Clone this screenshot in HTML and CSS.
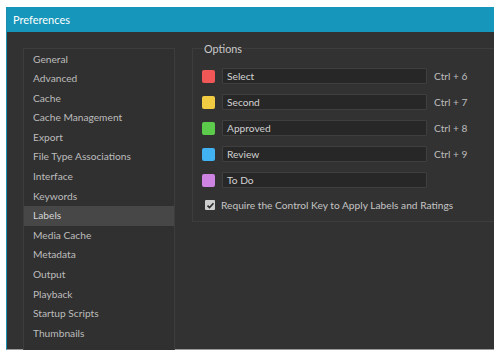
FILE: index.html
```html
<!DOCTYPE html>
<html lang="en">
<head>
  <meta charset="UTF-8">
  <title>Preferences</title>
  <link rel="stylesheet" href="styles.css">
</head>
<body>
  <div class="window">
    <div class="titlebar">Preferences</div>

    <div class="content">
      <ul class="sidebar">
        <li>General</li>
        <li>Advanced</li>
        <li>Cache</li>
        <li>Cache Management</li>
        <li>Export</li>
        <li>File Type Associations</li>
        <li>Interface</li>
        <li>Keywords</li>
        <li class="active">Labels</li>
        <li>Media Cache</li>
        <li>Metadata</li>
        <li>Output</li>
        <li>Playback</li>
        <li>Startup Scripts</li>
        <li>Thumbnails</li>
      </ul>

      <fieldset class="options">
        <legend>Options</legend>

        <div class="label-row">
          <span class="swatch red"></span>
          <div class="label-input">Select</div>
          <span class="shortcut">Ctrl + 6</span>
        </div>
        <div class="label-row">
          <span class="swatch yellow"></span>
          <div class="label-input">Second</div>
          <span class="shortcut">Ctrl + 7</span>
        </div>
        <div class="label-row">
          <span class="swatch green"></span>
          <div class="label-input">Approved</div>
          <span class="shortcut">Ctrl + 8</span>
        </div>
        <div class="label-row">
          <span class="swatch blue"></span>
          <div class="label-input">Review</div>
          <span class="shortcut">Ctrl + 9</span>
        </div>
        <div class="label-row">
          <span class="swatch purple"></span>
          <div class="label-input">To Do</div>
        </div>

        <label class="check-row">
          <span class="checkbox">
            <svg width="9" height="9" viewBox="0 0 9 9">
              <path d="M1.5 4.6l2 2 4-4.4" fill="none" stroke="#2b2b2b" stroke-width="1.6"/>
            </svg>
          </span>
          Require the Control Key to Apply Labels and Ratings
        </label>
      </fieldset>
    </div>
  </div>
</body>
</html>
```

FILE: styles.css
```css
* {
  margin: 0;
  padding: 0;
  box-sizing: border-box;
}

body {
  font-family: Lato, "Open Sans", sans-serif;
  font-size: 10.2px;
  background: #ffffff;
  padding: 7px 6px 0;
}

.window {
  width: 488px;
  height: 343px;
  background: #323232;
  border-left: 1px solid #1a8fae;
  border-bottom: 1px solid #9a9a9a;
  display: flex;
  flex-direction: column;
}

.titlebar {
  height: 25px;
  background: #1596ba;
  color: #ffffff;
  font-size: 11px;
  line-height: 25px;
  padding-left: 6px;
  flex-shrink: 0;
}

.content {
  flex: 1;
  display: flex;
  align-items: flex-start;
  gap: 17px;
  padding: 16px 0 0 16px;
}

/* left category list */
.sidebar {
  list-style: none;
  width: 152px;
  height: 302px;
  border: 1px solid #3d3d3d;
  border-bottom: none;
  background: #303030;
  padding-top: 0.5px;
}

.sidebar li {
  height: 19.6px;
  line-height: 19.6px;
  padding-left: 9px;
  color: #bcbcbc;
  white-space: nowrap;
}

.sidebar li.active {
  background: #474747;
  color: #d4d4d4;
}

/* options group */
.options {
  flex: 1;
  height: 179px;
  margin-top: -5px;
  border: 1px solid #3d3d3d;
  border-right: none;
  padding: 14px 0 0 9px;
  display: flex;
  flex-direction: column;
  gap: 10px;
}

.options legend {
  margin-left: 1px;
  padding: 0 1px;
  color: #cacaca;
  font-size: 10.8px;
  line-height: 11px;
}

.label-row {
  display: flex;
  align-items: center;
  height: 16px;
}

.swatch {
  width: 13px;
  height: 13px;
  border-radius: 2px;
  margin-right: 7px;
}

.red { background: #f25757; }
.yellow { background: #f1cb42; }
.green { background: #5ccb4b; }
.blue { background: #41b3f2; }
.purple { background: #cd83e2; }

.label-input {
  width: 205px;
  height: 16px;
  line-height: 14px;
  background: #272727;
  border: 1px solid #3f3f3f;
  border-radius: 1px;
  padding-left: 4px;
  color: #d2d2d2;
}

.shortcut {
  margin-left: 7px;
  color: #bdbdbd;
}

.check-row {
  display: flex;
  align-items: center;
  gap: 6px;
  margin-top: 1px;
  padding-left: 3px;
  color: #c4c4c4;
}

.checkbox {
  width: 10px;
  height: 10px;
  background: #cfcfcf;
  border-radius: 1px;
  display: flex;
  align-items: center;
  justify-content: center;
}
```
